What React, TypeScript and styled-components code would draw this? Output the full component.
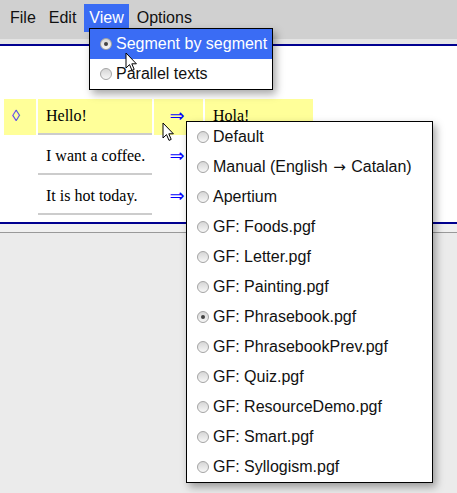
import styled, { createGlobalStyle } from "styled-components";

const GlobalStyle = createGlobalStyle`
  html, body, #root {
    margin: 0;
    padding: 0;
    height: 100%;
  }
  body {
    font-family: "Liberation Sans", Arial, sans-serif;
    font-size: 16px;
    color: #000;
    background: #ececec;
  }
`;

const Page = styled.div`
  position: relative;
  min-height: 100vh;
  display: flex;
  flex-direction: column;
  overflow: hidden;
`;

const MenuBar = styled.div`
  display: flex;
  gap: 3px;
  height: 44px;
  padding: 4px 0 0 5px;
  box-sizing: border-box;
  background: #d0d0d0;
  border-bottom: 5px solid #e4e4e4;
`;

const BlueRule = styled.div`
  height: 2px;
  background: #000090;
`;

const MenuItem = styled.div<{ $open?: boolean }>`
  height: 28px;
  line-height: 28px;
  padding: 0 5px;
  color: ${(p) => (p.$open ? "#fff" : "#111")};
  background: ${(p) => (p.$open ? "#3a6cf4" : "transparent")};
`;

const Document = styled.div`
  background: #fff;
  padding: 53px 0 7px 4px;
`;

const Segments = styled.div`
  display: grid;
  grid-template-columns: 32px 114px 49px 108px;
  grid-auto-rows: 36px;
  column-gap: 2px;
  row-gap: 4px;
  font-family: "Liberation Serif", "Times New Roman", serif;
`;

const Cell = styled.div<{ $current?: boolean }>`
  box-sizing: border-box;
  background: ${(p) => (p.$current ? "#ffff99" : "transparent")};
  display: flex;
  align-items: center;
`;

const Marker = styled(Cell)`
  padding-left: 8px;
  padding-bottom: 2px;
  color: #4a3cf0;
`;

const Text = styled(Cell)`
  padding: 0 0 0 8px;
  border-bottom: 2px solid #cccccc;
`;

const Arrow = styled(Cell)`
  justify-content: center;
  padding: 0 3px 4px 0;
  color: #0000ff;
  font-family: "DejaVu Sans", sans-serif;
  font-size: 18px;
`;

const Footer = styled.div`
  flex: 1;
  background: #ebebeb;
  border-top: 8px solid #f0f0f0;
  box-shadow: inset 0 1px 0 #999;
`;

const Dropdown = styled.div<{ $left: number; $top: number; $width: number }>`
  position: absolute;
  left: ${(p) => p.$left}px;
  top: ${(p) => p.$top}px;
  width: ${(p) => p.$width}px;
  box-sizing: border-box;
  background: #fff;
  border: 1px solid #000;
  box-shadow: 3px 4px 8px rgba(0, 0, 0, 0.35);
`;

const Option = styled.div<{ $active?: boolean }>`
  display: flex;
  align-items: center;
  gap: 4px;
  height: 30px;
  padding-left: 10px;
  white-space: nowrap;
  color: ${(p) => (p.$active ? "#fff" : "#111")};
  background: ${(p) => (p.$active ? "#3a6cf4" : "transparent")};
`;

const Glyph = styled.span`
  font-family: "DejaVu Sans", sans-serif;
  font-size: 15px;
  margin: 0 1px;
`;

const Radio = styled.span<{ $checked?: boolean }>`
  position: relative;
  flex: none;
  width: 12px;
  height: 12px;
  box-sizing: border-box;
  border-radius: 50%;
  border: 1px solid #a4a4a4;
  background: linear-gradient(#d6d6d6, #f7f7f7);
  &::after {
    content: "";
    display: ${(p) => (p.$checked ? "block" : "none")};
    position: absolute;
    left: 3px;
    top: 3px;
    width: 4px;
    height: 4px;
    border-radius: 50%;
    background: #444;
  }
`;

const Pointer = styled.svg<{ $x: number; $y: number }>`
  position: absolute;
  left: ${(p) => p.$x}px;
  top: ${(p) => p.$y}px;
  pointer-events: none;
`;

// translations of the rows below the popup are hidden by it in this view
const rows = [
  { src: "Hello!", dst: "Hola!", current: true },
  { src: "I want a coffee.", dst: "" },
  { src: "It is hot today.", dst: "" },
];

const engines = [
  "Default",
  "Manual (English → Catalan)",
  "Apertium",
  "GF: Foods.pgf",
  "GF: Letter.pgf",
  "GF: Painting.pgf",
  "GF: Phrasebook.pgf",
  "GF: PhrasebookPrev.pgf",
  "GF: Quiz.pgf",
  "GF: ResourceDemo.pgf",
  "GF: Smart.pgf",
  "GF: Syllogism.pgf",
];

function Label({ text }: { text: string }) {
  const parts = text.split("→");
  if (parts.length === 1) return <>{text}</>;
  return (
    <span>
      {parts[0]}
      <Glyph>→</Glyph>
      {parts[1]}
    </span>
  );
}

function Cursor({ x, y }: { x: number; y: number }) {
  return (
    <Pointer $x={x} $y={y} width="13" height="20" viewBox="0 0 13 20">
      <path
        d="M1 1 L1 16 L4.5 12.6 L7 18.4 L9.2 17.4 L6.8 11.8 L11.4 11.8 Z"
        fill="#fff"
        stroke="#000"
        strokeWidth="1"
        strokeLinejoin="round"
      />
    </Pointer>
  );
}

export default function App() {
  return (
    <>
      <GlobalStyle />
      <Page>
        <MenuBar>
          <MenuItem>File</MenuItem>
          <MenuItem>Edit</MenuItem>
          <MenuItem $open>View</MenuItem>
          <MenuItem>Options</MenuItem>
        </MenuBar>
        <BlueRule />
        <Document>
          <Segments>
            {rows.map((r) => (
              <>
                <Marker $current={r.current}>{r.current ? "◊" : ""}</Marker>
                <Text $current={r.current}>{r.src}</Text>
                <Arrow $current={r.current}>⇒</Arrow>
                <Text $current={r.current}>{r.dst}</Text>
              </>
            ))}
          </Segments>
        </Document>
        <BlueRule />
        <Footer />

        <Dropdown $left={89} $top={28} $width={184}>
          <Option $active>
            <Radio $checked />
            Segment by segment
          </Option>
          <Option>
            <Radio />
            Parallel texts
          </Option>
        </Dropdown>

        <Dropdown $left={186} $top={121} $width={247}>
          {engines.map((e) => (
            <Option key={e}>
              <Radio $checked={e === "GF: Phrasebook.pgf"} />
              <Label text={e} />
            </Option>
          ))}
        </Dropdown>

        <Cursor x={125} y={52} />
        <Cursor x={162} y={122} />
      </Page>
    </>
  );
}
